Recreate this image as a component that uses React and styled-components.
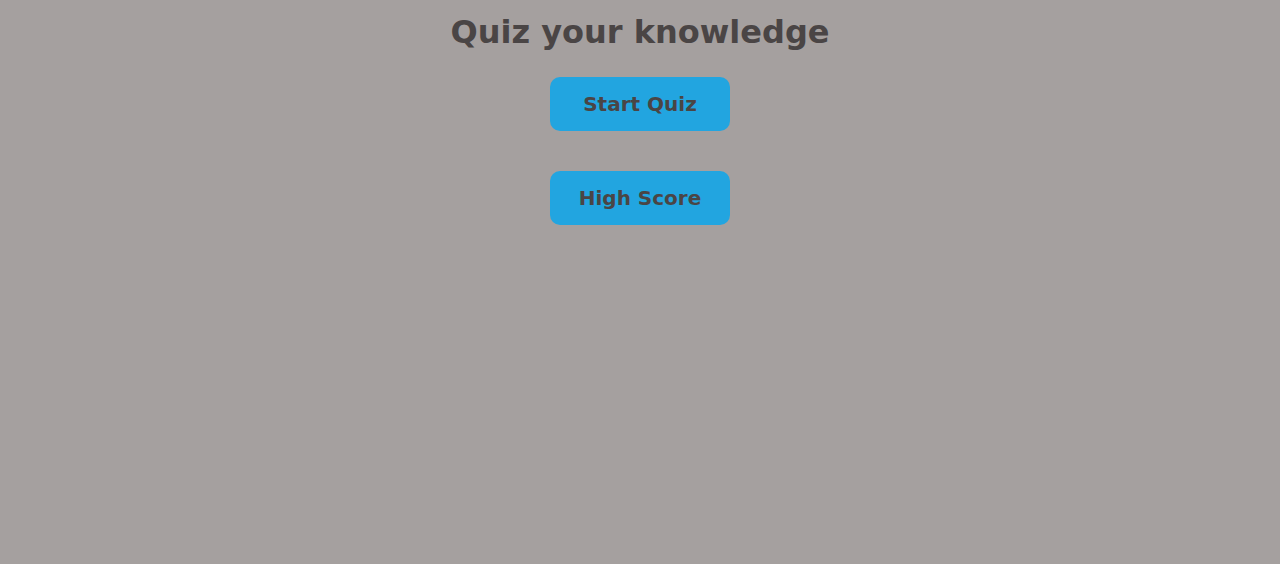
import React from 'react';
import styled, { createGlobalStyle } from 'styled-components';

const GlobalStyle = createGlobalStyle`
  html, body {
    margin: 0;
    padding: 0;
    background: #a5a09f;
    font-family: "DejaVu Sans", Verdana, sans-serif;
  }
`;

const Page = styled.main`
  display: flex;
  flex-direction: column;
  align-items: center;
  min-height: 564px;
`;

const Title = styled.h1`
  margin: 10px 0 0;
  font-size: 32px;
  line-height: 44px;
  font-weight: bold;
  color: #4a4545;
`;

const Menu = styled.div`
  display: flex;
  flex-direction: column;
  gap: 40px;
  margin-top: 23px;
`;

const Button = styled.button`
  width: 180px;
  height: 54px;
  border: none;
  border-radius: 10px;
  background: #22a5e0;
  color: #4a4545;
  font-family: inherit;
  font-size: 20px;
  font-weight: bold;
  cursor: pointer;
`;

const App = () => {
  return (
    <>
      <GlobalStyle />
      <Page>
        <Title>Quiz your knowledge</Title>
        <Menu>
          <Button>Start Quiz</Button>
          <Button>High Score</Button>
        </Menu>
      </Page>
    </>
  );
};

export default App;
